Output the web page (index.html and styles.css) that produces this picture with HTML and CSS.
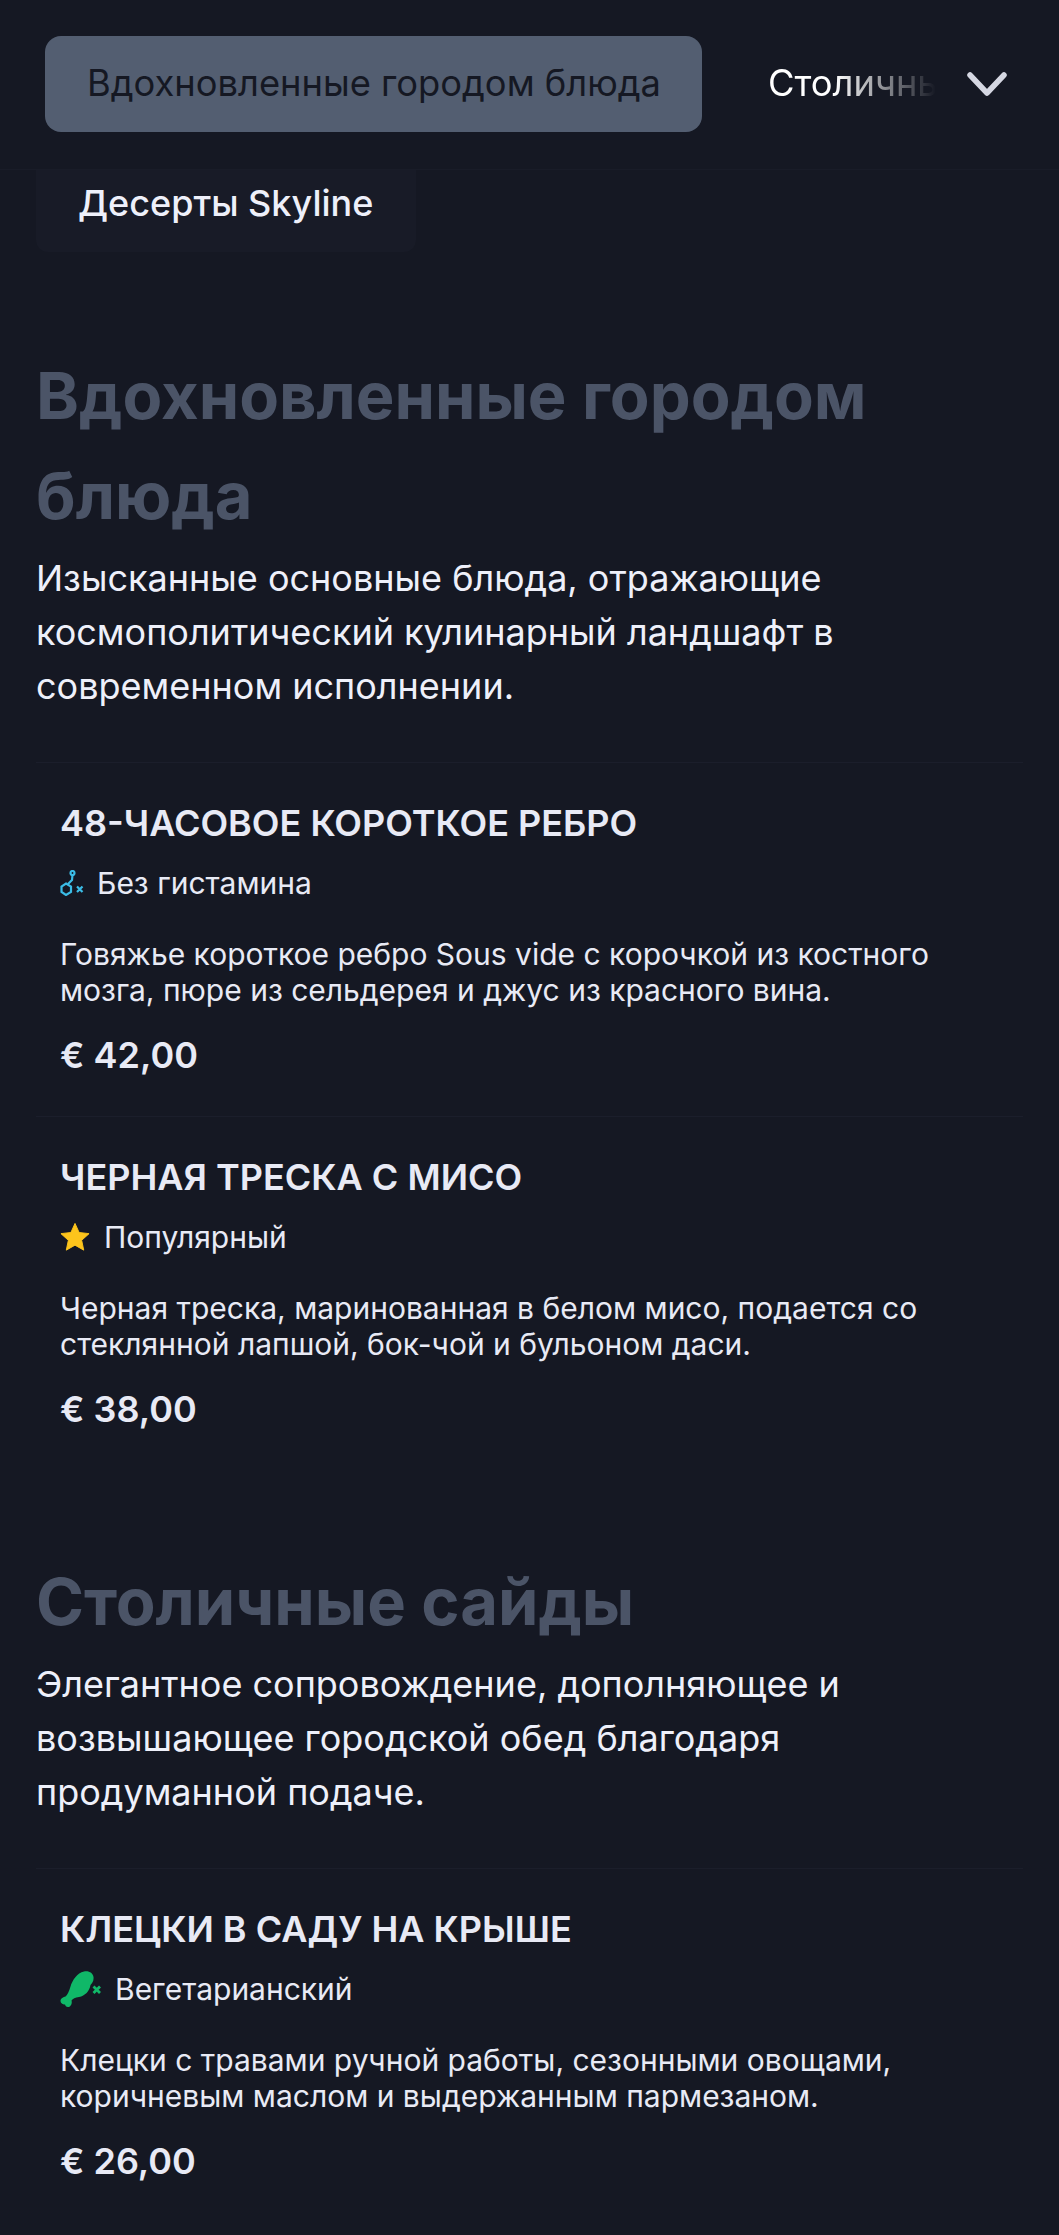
FILE: index.html
```html
<!DOCTYPE html>
<html lang="ru">
<head>
<meta charset="utf-8">
<title>Меню</title>
<link rel="stylesheet" href="styles.css">
</head>
<body>
<header class="topbar">
  <div class="tabs">
    <span class="tab active">Вдохновленные городом блюда</span>
    <span class="tab next"><span class="fade">Столичные</span></span>
  </div>
  <svg class="chev" viewBox="0 0 44 28" aria-hidden="true"><path d="M5 5 L22 23 L39 5"/></svg>
</header>
<main class="content">
  <div class="chip">Десерты Skyline</div>

  <section class="section first">
    <h2>Вдохновленные городом блюда</h2>
    <p class="lead">Изысканные основные блюда, отражающие космополитический кулинарный ландшафт в современном исполнении.</p>
    <article class="item">
      <h3>48-ЧАСОВОЕ КОРОТКОЕ РЕБРО</h3>
      <div class="badge gap-hist">
        <svg class="ic-hist" viewBox="0 0 24 26" aria-hidden="true">
          <g fill="none" stroke="#3bbce6" stroke-width="2.2"><circle cx="12.500" cy="3" r="2"/><path d="M12.500 5 L12 10 L8 14"/><path d="M6 13.500 L11 16.500 L11 22 L6 25 L1.500 22 L1.500 16.500 Z"/></g>
          <path d="M17 16.500 L22.500 22 M22.500 16.500 L17 22" stroke="#3bbce6" stroke-width="2.200"/>
        </svg>
        <span>Без гистамина</span>
      </div>
      <p class="desc">Говяжье короткое ребро Sous vide с корочкой из костного мозга, пюре из сельдерея и джус из красного вина.</p>
      <div class="price">€ 42,00</div>
    </article>
    <article class="item">
      <h3>ЧЕРНАЯ ТРЕСКА С МИСО</h3>
      <div class="badge gap-star">
        <svg class="ic-star" viewBox="0 0 32 32" aria-hidden="true"><path d="M16 1.500 L20.400 11.200 L31 12.400 L23.100 19.500 L25.300 30 L16 24.700 L6.700 30 L8.900 19.500 L1 12.400 L11.600 11.200 Z" fill="#fdc41c" stroke="#fdc41c" stroke-linejoin="round"/></svg>
        <span>Популярный</span>
      </div>
      <p class="desc">Черная треска, маринованная в белом мисо, подается со стеклянной лапшой, бок-чой и бульоном даси.</p>
      <div class="price">€ 38,00</div>
    </article>
  </section>

  <section class="section second">
    <h2>Столичные сайды</h2>
    <p class="lead">Элегантное сопровождение, дополняющее и возвышающее городской обед благодаря продуманной подаче.</p>
    <article class="item">
      <h3>КЛЕЦКИ В САДУ НА КРЫШЕ</h3>
      <div class="badge gap-leg">
        <svg class="ic-leg" viewBox="0 0 42 36" aria-hidden="true">
          <path d="M24 0.500 C29 -0.500 33 2 33.500 6 C34 10 32 12 30.500 14 C29.500 20 25 25 19 26 C15 26.500 13 27.500 11.500 29.500 C12.500 32.500 10.500 36 8 36 C6 36 5.500 35 5 33.500 C3.500 34 0.500 32.500 0.500 30 C0.500 27.500 3.500 26 5.500 25.500 C7.500 24 9 20.500 10.500 15.500 C12.500 9 17 2 24 0.500 Z" fill="#10b868"/>
          <path d="M33.500 15.500 L40 22 M40 15.500 L33.500 22" stroke="#10b868" stroke-width="2.800"/>
        </svg>
        <span>Вегетарианский</span>
      </div>
      <p class="desc">Клецки с травами ручной работы, сезонными овощами, коричневым маслом и выдержанным пармезаном.</p>
      <div class="price">€ 26,00</div>
    </article>
  </section>
</main>
</body>
</html>
```
FILE: styles.css
```css
* { box-sizing: border-box; }
html, body { margin: 0; padding: 0; }
body {
  width: 1059px;
  height: 2235px;
  overflow: hidden;
  background: #151823;
  color: #e8eaf5;
  font-family: Inter, "Noto Sans", sans-serif;
}
.topbar {
  height: 170px;
  display: flex;
  align-items: flex-start;
  padding: 36px 0 0 45px;
  border-bottom: 1px solid #191c28;
  position: relative;
}
.tabs { display: flex; gap: 26px; align-items: center; width: 893px; overflow: hidden; }
.tab { font-size: 36.3px; line-height: 94px; height: 96px; white-space: nowrap; flex: none; }
.tab.active {
  background: #535e71;
  color: #151823;
  border-radius: 16px;
  padding: 0 42px;
  width: 657px;
}
.tab.next { padding: 0 0 0 40px; width: 210px; overflow: hidden; color: #fff; }
.fade {
  display: block;
  width: 168px;
  overflow: hidden;
  -webkit-mask-image: linear-gradient(90deg, #000 40%, transparent 100%);
  mask-image: linear-gradient(90deg, #000 40%, transparent 100%);
}
.chev {
  position: absolute;
  left: 965px;
  top: 70px;
  width: 44px;
  height: 28px;
  fill: none;
  stroke: #d5d7e2;
  stroke-width: 5.5;
  stroke-linecap: round;
  stroke-linejoin: round;
}
.content { padding: 0 36px; }
.chip {
  width: 380px;
  height: 82px;
  padding: 9px 42px 0;
  background: #181b27;
  border-radius: 0 0 12px 12px;
  font-size: 36px;
  line-height: 48px;
  font-weight: 500;
  color: #eef0fa;
  white-space: nowrap;
}
h2 {
  margin: 0;
  font-size: 65px;
  line-height: 100px;
  font-weight: 700;
  color: #4b5467;
}
.section.first { padding-top: 94px; }
.section.second { padding-top: 82px; }
.lead {
  margin: 0 0 49px;
  font-size: 36px;
  line-height: 54px;
  color: #eef0fa;
}
.section h2 + .lead { margin-top: 5px; }
.item {
  border-top: 1px solid #1b1e2b;
  padding: 36px 24px 36px;
  height: 354px;
}
h3 {
  margin: 0;
  font-size: 36px;
  line-height: 48px;
  font-weight: 600;
  color: #e8eaf5;
}
.badge {
  display: flex;
  align-items: center;
  height: 36px;
  margin-top: 18px;
  font-size: 30px;
  line-height: 36px;
  color: #e8eaf5;
}
.gap-hist { gap: 13px; }
.gap-star { gap: 14px; }
.gap-leg { gap: 13px; }
.ic-hist { width: 24px; height: 26px; }
.ic-star { width: 30px; height: 30px; }
.ic-leg { width: 42px; height: 36px; }
.desc {
  margin: 35px 0 0;
  font-size: 30px;
  line-height: 36px;
  color: #e8eaf5;
}
.price {
  margin-top: 23px;
  font-size: 36px;
  line-height: 48px;
  font-weight: 600;
  color: #e8eaf5;
}
```
